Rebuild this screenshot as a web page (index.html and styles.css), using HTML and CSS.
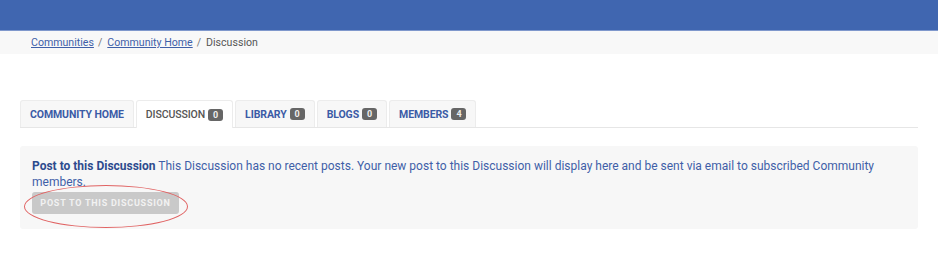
FILE: index.html
```html
<!DOCTYPE html>
<html lang="en">
<head>
<meta charset="utf-8">
<title>Discussion</title>
<link rel="stylesheet" href="styles.css">
</head>
<body>
<header class="topbar"></header>
<nav class="breadcrumb">
  <a href="#">Communities</a><span class="sep">/</span><a href="#">Community Home</a><span class="sep">/</span><span class="current">Discussion</span>
</nav>
<main class="content">
  <ul class="tabs">
    <li class="tab"><a href="#">COMMUNITY HOME</a></li>
    <li class="tab active"><a href="#">DISCUSSION <span class="badge">0</span></a></li>
    <li class="tab"><a href="#">LIBRARY <span class="badge">0</span></a></li>
    <li class="tab"><a href="#">BLOGS <span class="badge">0</span></a></li>
    <li class="tab"><a href="#">MEMBERS <span class="badge">4</span></a></li>
  </ul>
  <section class="panel">
    <p class="msg"><strong>Post to this Discussion</strong> This Discussion has no recent posts. Your new post to this Discussion will display here and be sent via email to subscribed Community members.</p>
    <div class="btn-wrap">
      <button class="btn" type="button">POST TO THIS DISCUSSION</button>
      <span class="circle"></span>
    </div>
  </section>
</main>
</body>
</html>
```
FILE: styles.css
```css
* { box-sizing: border-box; }
html, body { margin: 0; padding: 0; background: #fff; }
body { font-family: Roboto, "Liberation Sans", sans-serif; color: #555; }

.topbar {
  height: 31px;
  background: #4066b0;
  border-bottom: 1px solid #7f98cc;
}

.breadcrumb {
  height: 23px;
  background: #f8f8f8;
  padding: 0 0 0 31px;
  display: flex;
  align-items: center;
  font-size: 10.6px;
}
.breadcrumb a { color: #3f5fa8; text-decoration: underline; }
.breadcrumb .sep { color: #777; margin: 0 5px 0 4px; }
.breadcrumb .current { color: #555; }

.content { padding: 46px 20px 0 20px; }

.tabs {
  list-style: none;
  margin: 0;
  padding: 0;
  display: flex;
  gap: 2px;
  border-bottom: 1px solid #e6e6e6;
}
.tab {
  height: 27px;
  background: #f7f7f7;
  border: 1px solid #ececec;
  border-bottom: none;
  border-radius: 3px 3px 0 0;
  display: flex;
  align-items: center;
  padding: 0 9px;
  margin-bottom: -1px;
}
.tab a {
  color: #3b5ba6;
  font-size: 10.5px;
  font-weight: 700;
  text-decoration: none;
  letter-spacing: -0.1px;
  display: flex;
  align-items: center;
  gap: 3px;
}
.tab.active { background: #fff; height: 28px; }
.tab.active a { color: #555; font-weight: 500; }
.badge {
  display: inline-block;
  background: #666;
  color: #eee;
  border-radius: 3px;
  font-size: 9px;
  font-weight: 700;
  line-height: 12px;
  min-width: 15px;
  text-align: center;
  padding: 0 3px;
}

.panel {
  margin-top: 18px;
  background: #f7f7f7;
  border-radius: 3px;
  padding: 12px 12px 13px 12px;
  height: 83px;
}
.msg {
  margin: 0;
  font-size: 12px;
  line-height: 16px;
  color: #3f5fa8;
}
.msg strong { color: #2d4b8e; font-weight: 700; }

.btn-wrap { position: relative; display: inline-block; margin-top: 2px; }
.btn {
  display: block;
  width: 147px;
  height: 22px;
  border: none;
  border-radius: 3px;
  background: #c9c9c9;
  color: #f2f2f2;
  font-family: Roboto, "Liberation Sans", sans-serif;
  font-size: 9px;
  font-weight: 700;
  letter-spacing: 0.75px;
  padding: 0;
}
.circle {
  position: absolute;
  left: -8px;
  top: -7px;
  width: 164px;
  height: 43px;
  border: 1px solid #e06363;
  border-radius: 50%;
  pointer-events: none;
}
```
